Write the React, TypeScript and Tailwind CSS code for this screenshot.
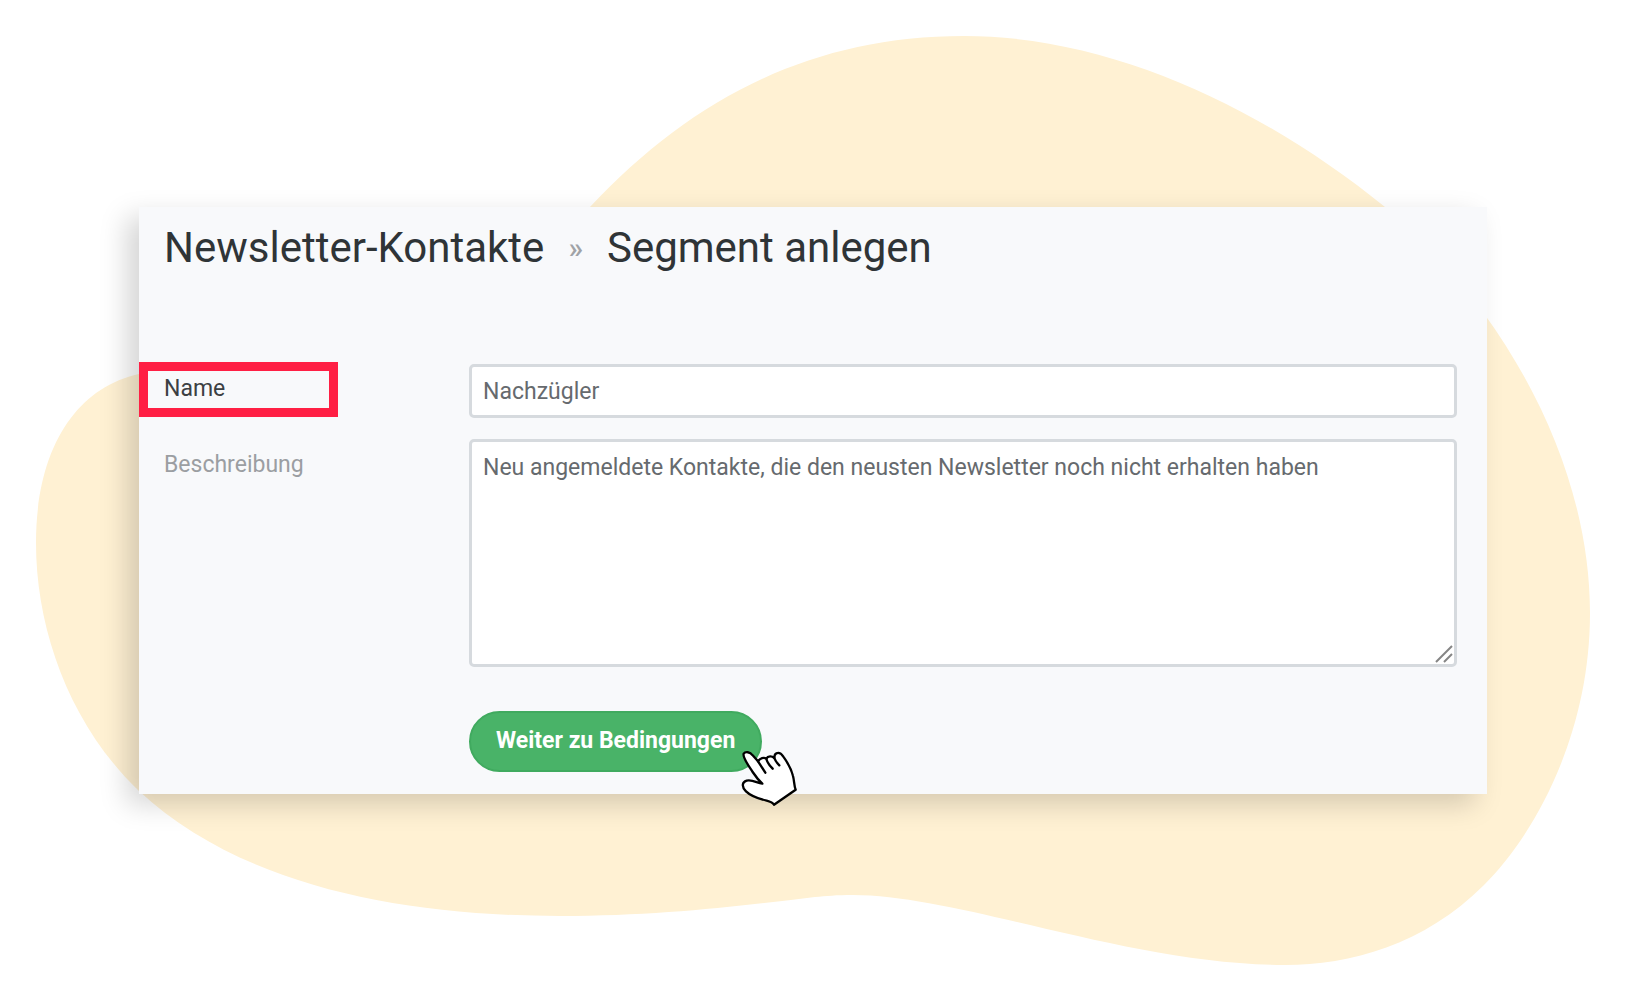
import React, { useState } from 'react';

const BlobBackground: React.FC = () => (
    <svg className="absolute inset-0 w-full h-full" viewBox="0 0 1631 1002" preserveAspectRatio="none" aria-hidden="true">
        <path
            fill="#fff1d3"
            d="M964 36 C1114 36 1265 110 1385 207 C1496 300 1590 455 1590 613 C1590 740 1530 840 1484 885 C1424 945 1350 965 1285 965 C1130 965 960 895 853 895 C836 895 826 896 815 897 C740 906 660 916 560 916 C400 916 240 885 139 791 C70 725 36 630 36 543 C36 450 75 388 139 374 C330 330 400 410 590 207 C690 100 810 36 964 36 Z"
        />
    </svg>
);

const HandPointer: React.FC = () => (
    <svg
        className="absolute left-[261px] top-[29px] w-20 h-[75px] pointer-events-none"
        viewBox="0 0 240 225"
        stroke="#000"
        strokeWidth="7"
        strokeLinecap="round"
        strokeLinejoin="round"
        aria-hidden="true"
    >
        <path
            fill="#fff"
            d="M132 194 L197 149 C192 138 193 122 189 108 C184 86 170 64 160 50 C153 39 146 37 139 40 C134 42 133 48 133 54 C126 48 114 47 109 56 C102 51 90 54 84 64 L68 46 C60 35 46 34 41 41 C37 52 55 76 68 96 C78 111 87 122 97 131 C80 128 66 118 50 122 C36 126 34 140 48 154 C62 168 90 177 110 182 C121 185 129 189 132 194 Z"
        />
        <path fill="none" d="M84 64 L106 98 M109 56 C111 68 120 78 128 86 M133 54 C136 63 142 70 148 76" />
    </svg>
);

const ResizeGrip: React.FC = () => (
    <svg className="absolute right-1 bottom-1 w-[18px] h-[18px] pointer-events-none" viewBox="0 0 18 18" stroke="#858585" strokeWidth="2" aria-hidden="true">
        <path d="M1 17 L17 1 M9 17 L17 9" />
    </svg>
);

const fieldClasses = 'block w-full rounded-[5px] border-[3px] border-[#d6dade] bg-white px-[11px] text-[23px] text-[#666a6e] outline-none';

export default function App() {
    const [name, setName] = useState('Nachzügler');
    const [description, setDescription] = useState(
        'Neu angemeldete Kontakte, die den neusten Newsletter noch nicht erhalten haben'
    );

    return (
        <div className="relative min-h-screen flex items-start bg-white pt-[207px] pl-[139px] pr-36 font-[Roboto,sans-serif]">
            <BlobBackground />
            <main className="relative flex-1 bg-[#f8f9fb] pb-[22px] shadow-[-12px_10px_26px_rgba(0,0,0,0.17)]">
                <h1 className="flex items-center px-[25px] pt-4 text-[42px] leading-[50px] text-[#2f3437]">
                    Newsletter-Kontakte
                    <span className="px-6 text-[30px] font-medium text-[#a0a3a7]">»</span>
                    Segment anlegen
                </h1>

                <form className="mt-[89px] pr-[30px]" onSubmit={(e) => e.preventDefault()}>
                    <div className="flex items-start">
                        <div className="w-[330px] shrink-0">
                            <label htmlFor="name" className="block w-[199px] h-[55px] border-[9px] border-[#ff1f44] pl-4 text-[23px] leading-9 text-[#3c4043]">
                                Name
                            </label>
                        </div>
                        <div className="flex-1 pt-[2px]">
                            <input id="name" className={`${fieldClasses} h-[54px]`} value={name} onChange={(e) => setName(e.target.value)} />
                        </div>
                    </div>

                    <div className="flex items-start mt-[21px]">
                        <label htmlFor="description" className="w-[330px] shrink-0 pl-[25px] pt-2 text-[23px] leading-9 text-[#9b9ea2]">
                            Beschreibung
                        </label>
                        <div className="relative flex-1">
                            <textarea
                                id="description"
                                className={`${fieldClasses} h-[228px] resize-none pt-2 leading-9`}
                                value={description}
                                onChange={(e) => setDescription(e.target.value)}
                            />
                            <ResizeGrip />
                        </div>
                    </div>

                    <div className="relative ml-[330px] mt-[44px]">
                        <button type="submit" className="block h-[61px] rounded-full border-2 border-[#40aa5f] bg-[#49b368] px-[25px] text-[23px] font-bold text-white">
                            Weiter zu Bedingungen
                        </button>
                        <HandPointer />
                    </div>
                </form>
            </main>
        </div>
    );
}
